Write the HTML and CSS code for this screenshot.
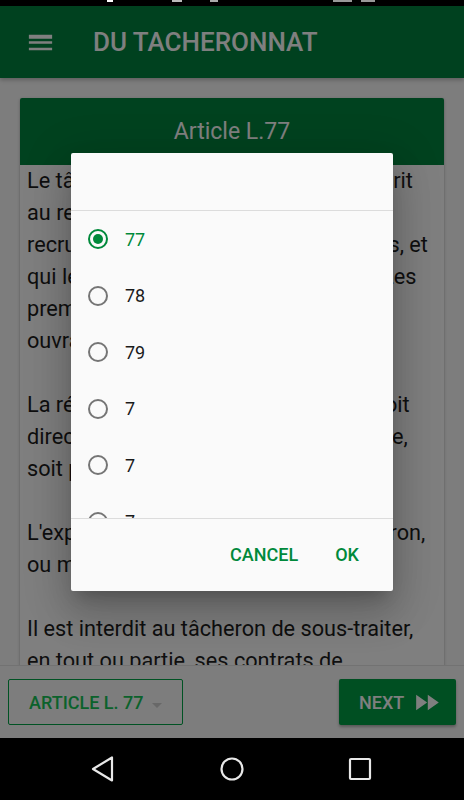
FILE: index.html
```html
<!DOCTYPE html>
<html lang="fr">
<head>
<meta charset="utf-8">
<title>Du tâcheronnat</title>
<link rel="stylesheet" href="styles.css">
</head>
<body>
<div class="status">
  <span class="bit b1"></span>
  <span class="bit b2"></span>
  <span class="bit b3"></span>
  <span class="bit b4"></span>
  <span class="bit b5"></span>
</div>
<header class="toolbar">
  <svg class="menu" viewBox="0 0 24 24" width="31" height="31"><path d="M3 18h18v-2H3v2zm0-5h18v-2H3v2zm0-6v2h18V6H3z" fill="#fff"/></svg>
  <h1 class="title">DU TACHERONNAT</h1>
</header>
<main class="content">
  <article class="card">
    <h2 class="card-head">Article L.77</h2>
    <div class="card-body">
      <p>Le tâcheron est un artisan qui a souscrit<br>au registre du commerce un acte, qui<br>recrute lui-même des ouvriers qualifiés, et<br>qui les dirige sous sa responsabilité. Les<br>premiers sont avisés de sa qualité, en<br>ouvrant le chantier.</p>
      <p>La rémunération des ouvriers a lieu, soit<br>directement par le tâcheron en principe,<br>soit par l'entrepreneur principal.</p>
      <p>L'exploitation est à la charge du tâcheron,<br>ou même de l'entrepreneur.</p>
      <p>Il est interdit au tâcheron de sous-traiter,<br>en tout ou partie, ses contrats de<br>tâcheronnat.</p>
    </div>
  </article>
</main>
<footer class="bottombar">
  <button class="btn-outline">ARTICLE L. 77 <span class="caret"></span></button>
  <button class="btn-next">NEXT <svg viewBox="0 0 24 24" width="31" height="31"><path d="M4 18l8.5-6L4 6v12zm9-12v12l8.5-6L13 6z" fill="#fff"/></svg></button>
</footer>
<nav class="navbar">
  <svg class="nav-icon" width="30" height="30" viewBox="0 0 30 30"><path d="M23 3.5 L23 26.5 L4 15 Z" fill="none" stroke="#e8e8e8" stroke-width="2.2" stroke-linejoin="round"/></svg>
  <svg class="nav-icon" width="30" height="30" viewBox="0 0 30 30"><circle cx="15" cy="15" r="10.5" fill="none" stroke="#e8e8e8" stroke-width="2.2"/></svg>
  <svg class="nav-icon" width="30" height="30" viewBox="0 0 30 30"><rect x="5" y="5" width="20" height="20" rx="1" fill="none" stroke="#e8e8e8" stroke-width="2.2"/></svg>
</nav>
<div class="scrim"></div>
<div class="dialog">
  <div class="dialog-title"></div>
  <ul class="options">
    <li class="opt selected"><span class="radio"></span><span>77</span></li>
    <li class="opt"><span class="radio"></span><span>78</span></li>
    <li class="opt"><span class="radio"></span><span>79</span></li>
    <li class="opt"><span class="radio"></span><span>7</span></li>
    <li class="opt"><span class="radio"></span><span>7</span></li>
    <li class="opt"><span class="radio"></span><span>7</span></li>
  </ul>
  <div class="actions">
    <button class="txt-btn">CANCEL</button>
    <button class="txt-btn">OK</button>
  </div>
</div>
</body>
</html>
```
FILE: styles.css
```css
* { box-sizing: border-box; }
html, body { margin: 0; padding: 0; }
body {
  width: 464px;
  height: 800px;
  overflow: hidden;
  position: relative;
  display: flex;
  flex-direction: column;
  background: #fafafa;
  font-family: Roboto, "Noto Sans", sans-serif;
}
.status {
  height: 6px;
  background: #000;
  display: flex;
  align-items: flex-start;
  flex-shrink: 0;
}
.bit { height: 2px; background: #d8d8d8; display: block; }
.b1 { width: 6px; margin-left: 107px; background: #fff; }
.b2 { width: 10px; margin-left: 59px; background: #bbb; }
.b3 { width: 8px; margin-left: 28px; background: #aaa; }
.b4 { width: 19px; margin-left: 115px; background: #999; }
.b5 { width: 14px; margin-left: 9px; background: #999; }

.toolbar {
  height: 72px;
  flex-shrink: 0;
  background: #00823f;
  display: flex;
  align-items: center;
  padding-left: 25px;
  box-shadow: 0 2px 4px rgba(0,0,0,.25);
  position: relative;
  z-index: 1;
}
.menu { display: block; }
.title {
  margin: 0 0 0 37px;
  color: #fff;
  font-size: 26px;
  font-weight: 500;
  letter-spacing: 0;
}
.content {
  flex: 1;
  overflow: hidden;
  padding: 20px 20px 0;
}
.card {
  background: #fff;
  border-radius: 2px;
  box-shadow: 0 1px 3px rgba(0,0,0,.3);
}
.card-head {
  margin: 0;
  height: 67px;
  background: #00843f;
  color: #fff;
  font-size: 23px;
  font-weight: 400;
  display: flex;
  align-items: center;
  justify-content: center;
  border-radius: 2px 2px 0 0;
}
.card-body {
  padding: 0 7px;
  color: #1e1e1e;
  font-size: 21.7px;
  line-height: 32px;
}
.card-body p { margin: 0 0 32px; white-space: nowrap; }

.bottombar {
  height: 73px;
  flex-shrink: 0;
  background: #fafafa;
  border-top: 1px solid #e4e4e4;
  display: flex;
  justify-content: space-between;
  align-items: flex-start;
  padding: 13px 8px 0;
}
.btn-outline {
  height: 46px;
  width: 175px;
  border: 1px solid #00a546;
  border-radius: 2px;
  background: transparent;
  color: #16c457;
  font-family: inherit;
  font-size: 18px;
  font-weight: 500;
  display: flex;
  align-items: center;
  padding: 0 0 0 20px;
}
.caret {
  width: 0; height: 0;
  border-left: 5.5px solid transparent;
  border-right: 5.5px solid transparent;
  border-top: 5.5px solid #d0d0d0;
  margin-left: 8px;
  margin-top: 6px;
}
.btn-next {
  height: 46px;
  width: 117px;
  border: 0;
  border-radius: 2px;
  background: #009e45;
  color: #fff;
  font-family: inherit;
  font-size: 18px;
  font-weight: 500;
  display: flex;
  align-items: center;
  padding: 0 0 0 20px;
  gap: 7px;
  box-shadow: 0 2px 3px rgba(0,0,0,.3);
}
.btn-next svg { display: block; }

.navbar {
  height: 62px;
  flex-shrink: 0;
  background: #000;
  display: flex;
  align-items: center;
  padding-left: 89px;
  gap: 98px;
  position: relative;
  z-index: 3;
}
.nav-icon { display: block; }

.scrim {
  position: absolute;
  left: 0; right: 0; top: 6px; bottom: 62px;
  background: rgba(0,0,0,.5);
  z-index: 2;
}
.dialog {
  position: absolute;
  left: 71px; top: 153px;
  width: 322px; height: 438px;
  background: #fafafa;
  border-radius: 2px;
  z-index: 4;
  display: flex;
  flex-direction: column;
  box-shadow: 0 11px 15px -7px rgba(0,0,0,.2), 0 24px 38px 3px rgba(0,0,0,.14), 0 9px 46px 8px rgba(0,0,0,.12);
}
.dialog-title {
  height: 58px;
  border-bottom: 1px solid #dcdcdc;
  flex-shrink: 0;
}
.options {
  list-style: none;
  margin: 0;
  padding: 0;
  height: 307px;
  overflow: hidden;
  flex-shrink: 0;
}
.opt {
  height: 56.5px;
  display: flex;
  align-items: center;
  padding-left: 17px;
  gap: 17px;
  font-size: 18px;
  color: #1a1a1a;
}
.radio {
  width: 20px; height: 20px;
  border: 2px solid #757575;
  border-radius: 50%;
  display: flex;
  align-items: center;
  justify-content: center;
  flex-shrink: 0;
}
.selected { color: #00893b; }
.selected .radio { border-color: #00893b; }
.selected .radio::after {
  content: "";
  width: 10px; height: 10px;
  border-radius: 50%;
  background: #00893b;
}
.actions {
  flex: 1;
  border-top: 1px solid #dcdcdc;
  display: flex;
  justify-content: flex-end;
  align-items: center;
  padding: 0 28px 2px 0;
  gap: 25px;
}
.txt-btn {
  border: 0;
  background: transparent;
  color: #00893b;
  font-family: inherit;
  font-size: 18px;
  font-weight: 500;
  padding: 8px 6px;
}
```
